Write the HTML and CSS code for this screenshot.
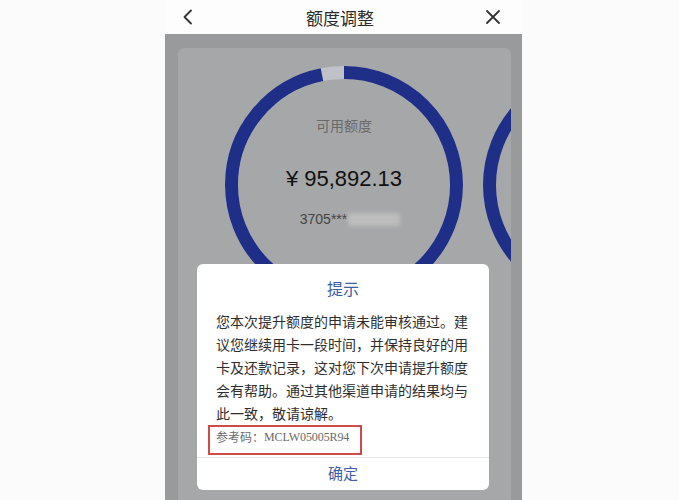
FILE: index.html
```html
<!DOCTYPE html>
<html lang="zh">
<head>
<meta charset="utf-8">
<link rel="stylesheet" href="styles.css">
</head>
<body>
<div class="phone">
  <header class="nav">
    <svg class="nav-icon" width="14" height="16" viewBox="0 0 14 16"><path d="M10 1.5 L3.5 8 L10 14.5" fill="none" stroke="#333" stroke-width="1.8" stroke-linecap="round" stroke-linejoin="round"/></svg>
    <div class="nav-title">额度调整</div>
    <svg class="nav-icon" width="16" height="16" viewBox="0 0 16 16"><path d="M2 2 L14 14 M14 2 L2 14" fill="none" stroke="#333" stroke-width="1.8" stroke-linecap="round"/></svg>
  </header>
  <main class="screen">
    <section class="card">
      <div class="carousel">
        <div class="slide">
          <svg class="ring" width="238" height="238" viewBox="0 0 238 238">
            <circle cx="119" cy="119" r="112.5" fill="none" stroke="#bfc2c9" stroke-width="13"/>
            <circle cx="119" cy="119" r="112.5" fill="none" stroke="#1f2e87" stroke-width="13" stroke-dasharray="684 707" transform="rotate(-90 119 119)"/>
          </svg>
          <div class="label">可用额度</div>
          <div class="amount">¥ 95,892.13</div>
          <div class="cardno">3705***<span class="blur"></span></div>
        </div>
        <div class="slide">
          <svg class="ring" width="238" height="238" viewBox="0 0 238 238">
            <circle cx="119" cy="119" r="112.5" fill="none" stroke="#1f2e87" stroke-width="13"/>
          </svg>
        </div>
      </div>
    </section>
  </main>
  <div class="dialog">
    <div class="dlg-title">提示</div>
    <p class="dlg-body">您本次提升额度的申请未能审核通过。建<br>议您继续用卡一段时间，并保持良好的用<br>卡及还款记录，这对您下次申请提升额度<br>会有帮助。通过其他渠道申请的结果均与<br>此一致，敬请谅解。</p>
    <div class="ref-box"><span class="ref-label">参考码：</span><span class="ref-code">MCLW05005R94</span></div>
    <div class="dlg-btn">确定</div>
  </div>
</div>
</body>
</html>
```
FILE: styles.css
```css
html, body {
  margin: 0;
  padding: 0;
  background: #fbfbfb;
  width: 679px;
  height: 500px;
  overflow: hidden;
  font-family: "Noto Sans CJK SC", "Noto Sans", sans-serif;
}
.phone {
  position: relative;
  margin-left: 165px;
  width: 357px;
  height: 500px;
  display: flex;
  flex-direction: column;
  overflow: hidden;
}
.nav {
  height: 34px;
  flex: none;
  background: #fdfdfd;
  display: flex;
  align-items: center;
  justify-content: space-between;
  padding: 0 21px 0 16px;
  box-sizing: border-box;
}
.nav-icon { display: block; }
.nav-title {
  font-size: 17px;
  color: #2a2a2a;
  line-height: 20px;
  margin-top: 1px;
}
.screen {
  flex: 1;
  background: #999a9b;
  padding: 14px 11px 0 13px;
}
.card {
  background: #a6a7a8;
  border-radius: 6px 6px 0 0;
  height: 470px;
  overflow: hidden;
}
.carousel {
  display: flex;
  gap: 20px;
  padding: 18px 0 0 47px;
}
.slide {
  position: relative;
  flex: none;
  width: 238px;
  height: 238px;
  display: flex;
  flex-direction: column;
  align-items: center;
}
.ring { position: absolute; left: 0; top: 0; }
.label {
  position: relative;
  margin-top: 49px;
  font-size: 14px;
  line-height: 20px;
  color: #6a6a6a;
}
.amount {
  position: relative;
  margin-top: 29px;
  font-family: "Liberation Sans", Arial, sans-serif;
  font-size: 22px;
  line-height: 30px;
  color: #111;
}
.cardno {
  position: relative;
  margin-top: 15px;
  font-family: "Liberation Sans", Arial, sans-serif;
  font-size: 14px;
  line-height: 20px;
  color: #444;
  display: flex;
  align-items: center;
  margin-left: 12px;
}
.blur {
  display: block;
  background: #bdbdbd;
  filter: blur(2px);
  margin-left: 1px;
  width: 52px;
  height: 13px;
}
.dialog {
  position: absolute;
  left: 32px;
  top: 264px;
  width: 292px;
  height: 226px;
  background: #fff;
  border-radius: 6px;
  box-sizing: border-box;
  padding-top: 14px;
  display: flex;
  flex-direction: column;
}
.dlg-title {
  text-align: center;
  font-size: 16px;
  line-height: 20px;
  color: #3b5ea6;
}
.dlg-body {
  margin: 12px 0 0 19px;
  width: 256px;
  font-size: 14px;
  line-height: 23px;
  color: #2e2e2e;
}
.ref-box {
  margin: 0 0 0 11px;
  width: 154px;
  height: 30px;
  box-sizing: border-box;
  border: 2px solid #cf4a4a;
  padding: 2px 0 0 6px;
  display: flex;
  align-items: flex-start;
  font-size: 12px;
  line-height: 16px;
  color: #6a6a6a;
  white-space: nowrap;
}
.ref-code {
  font-family: "Liberation Serif", "Times New Roman", serif;
  font-size: 12px;
  letter-spacing: -0.1px;
}
.dlg-btn {
  margin-top: 2px;
  border-top: 1px solid #e6e6e6;
  flex: 1;
  display: flex;
  align-items: center;
  justify-content: center;
  padding-bottom: 3px;
  font-size: 15px;
  color: #3b5ea6;
}
```
